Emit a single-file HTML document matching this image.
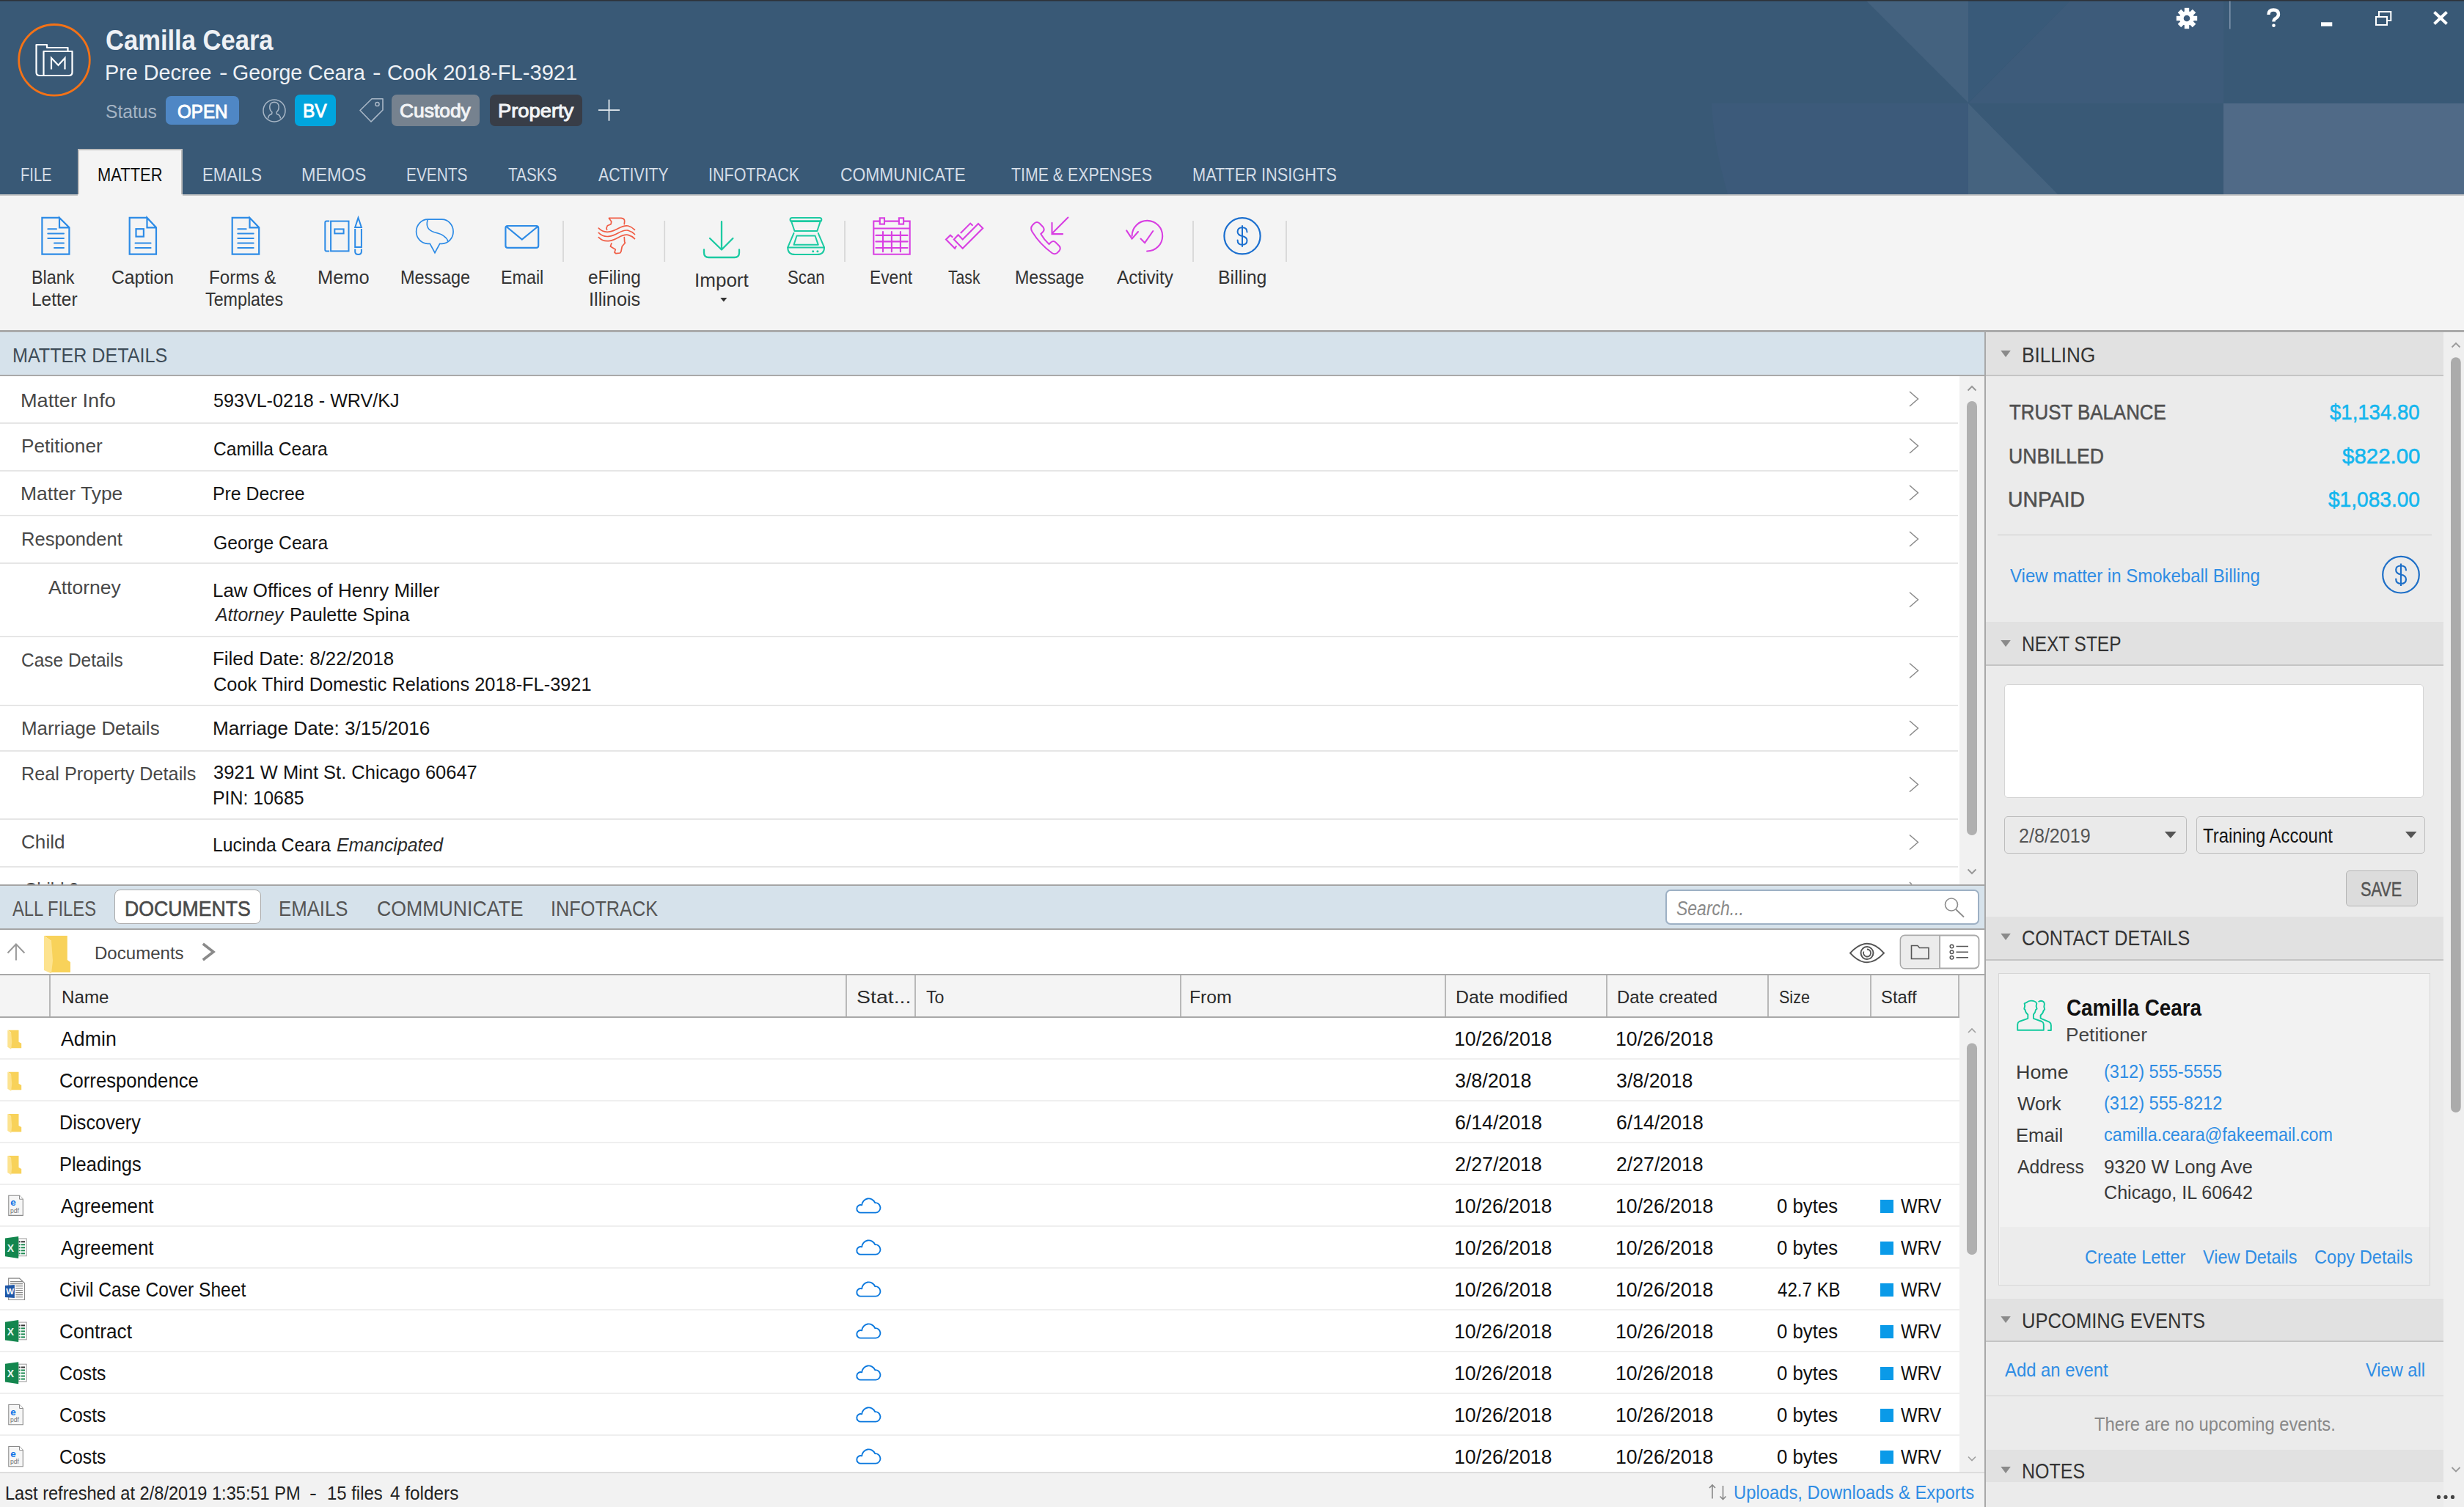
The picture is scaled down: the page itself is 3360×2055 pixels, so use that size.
<!DOCTYPE html>
<html><head><meta charset="utf-8"><title>Smokeball Matter</title>
<style>
html,body{margin:0;padding:0;}
body{width:3360px;height:2055px;overflow:hidden;position:relative;background:#ffffff;font-family:"Liberation Sans",sans-serif;}
.t{position:absolute;white-space:nowrap;line-height:1;transform-origin:0 0;}
.r{position:absolute;}
svg{position:absolute;left:0;top:0;}
</style></head><body>
<div class="r" style="left:0.0px;top:0.0px;width:3360.0px;height:265.0px;background:#395976;"></div>
<svg width="3360" height="265" viewBox="0 0 3360 265" style="left:0;top:0">
<path d="M2334,141 L2684,141 L2684,265 L2356,265 Q2336,195 2334,141 Z" fill="#3c5a7a"/>
<polygon points="2544,0 2684,0 2684,140" fill="#44627f"/>
<polygon points="2684,0 2824,0 2684,140" fill="#395a79"/>
<polygon points="2824,0 3032,0 3032,141 2684,141" fill="#3d5b7a"/>
<polygon points="2684,141 2806,265 2684,265" fill="#45637f"/>
<rect x="3032" y="141" width="328" height="124" fill="#506a87"/>
<rect x="0" y="0" width="3360" height="1.5" fill="#2d3238"/>
<circle cx="74" cy="81.8" r="48.3" fill="none" stroke="#f47216" stroke-width="2.8"/>
<g fill="none" stroke="#ffffff" stroke-width="2.2" stroke-linejoin="round">
<path d="M59.5,103 L54,103 Q49.5,103 49.5,98.5 L49.5,61 L64,61 L64,65 L92.5,65 L92.5,69.5"/>
<path d="M59.5,103 L59.5,70 L98.5,70 L98.5,98.5 Q98.5,103 94,103 Z"/>
<path d="M70,94.5 L70,79 L79.5,89 L88.5,79 L88.5,94.5" stroke-linejoin="miter"/>
</g>
<g transform="translate(2982,25)">
<circle r="10" fill="#fff"/>
<g fill="#fff"><rect x="-3.2" y="-14.2" width="6.4" height="6" /><rect x="-3.2" y="8.2" width="6.4" height="6"/>
<rect x="-14.2" y="-3.2" width="6" height="6.4"/><rect x="8.2" y="-3.2" width="6" height="6.4"/>
<g transform="rotate(45)"><rect x="-3.2" y="-14.2" width="6.4" height="6" /><rect x="-3.2" y="8.2" width="6.4" height="6"/>
<rect x="-14.2" y="-3.2" width="6" height="6.4"/><rect x="8.2" y="-3.2" width="6" height="6.4"/></g></g>
<circle r="4.3" fill="#3d5b7a"/>
</g>
<rect x="3040" y="1.5" width="1.6" height="38" fill="#7d93ab"/>
<path d="M3093.5,20 Q3093.5,13.5 3100.2,13.5 Q3107,13.5 3107,19.5 Q3107,23 3102.5,25.5 Q3100.5,26.8 3100.5,29.5" fill="none" stroke="#fff" stroke-width="4.4"/>
<circle cx="3100.5" cy="34.8" r="2.3" fill="#fff"/>
<rect x="3165" y="30.3" width="15.3" height="5.5" fill="#fff"/>
<g fill="none" stroke="#fff" stroke-width="2"><rect x="3240" y="23" width="15" height="11"/><path d="M3244,22 L3244,16 L3260.3,16 L3260.3,28 L3256,28"/></g>
<path d="M3319.5,16.5 L3336.5,32.5 M3336.5,16.5 L3319.5,32.5" stroke="#fff" stroke-width="4"/>
<circle cx="374" cy="150.9" r="15" fill="none" stroke="#a9b7c6" stroke-width="1.5"/>
<path d="M365.5,161.5 Q366,156.5 370.5,155.5 L371,153 Q367.5,150.5 367.8,145 Q368.3,139.5 374,139.3 Q379.7,139.5 380.2,145 Q380.5,150.5 377,153 L377.5,155.5 Q382,156.5 382.5,161.5" fill="none" stroke="#a9b7c6" stroke-width="1.5"/>
<path d="M491,150.5 L507,134.8 L522,134.8 L522,150 L506,166 Z" fill="none" stroke="#a9b7c6" stroke-width="1.6" stroke-linejoin="round"/>
<circle cx="514.5" cy="142" r="2.6" fill="none" stroke="#a9b7c6" stroke-width="1.5"/>
<path d="M816,150.2 L845,150.2 M830.5,135.8 L830.5,164.7" stroke="#e4eaf0" stroke-width="1.8"/>
</svg>
<div class="t" style="left:143.6px;top:36.4px;font-size:38.37px;color:#eef1f5;font-weight:bold;transform:scaleX(0.9009);">Camilla Ceara</div>
<div class="t" style="left:142.6px;top:84.7px;font-size:29.07px;color:#eef1f5;transform:scaleX(0.9904);">Pre Decree</div>
<div class="t" style="left:298.5px;top:84.7px;font-size:29.07px;color:#eef1f5;transform:scaleX(1.1794);">-</div>
<div class="t" style="left:317.2px;top:84.7px;font-size:29.07px;color:#eef1f5;transform:scaleX(0.9816);">George Ceara</div>
<div class="t" style="left:507.5px;top:84.7px;font-size:29.07px;color:#eef1f5;transform:scaleX(1.1935);">-</div>
<div class="t" style="left:528.1px;top:84.7px;font-size:29.07px;color:#eef1f5;transform:scaleX(1.0030);">Cook 2018-FL-3921</div>
<div class="t" style="left:143.9px;top:139.6px;font-size:25.73px;color:#a5b4c4;transform:scaleX(0.9555);">Status</div>
<div class="r" style="left:226.0px;top:131.0px;width:100.0px;height:39.0px;background:#4f87c5;border-radius:7px;"></div>
<div class="t" style="left:241.9px;top:139.4px;font-size:26.02px;color:#ffffff;transform:scaleX(0.9304);-webkit-text-stroke:1.00px #ffffff;">OPEN</div>
<div class="r" style="left:402.0px;top:129.0px;width:56.0px;height:42.7px;background:#00a5de;border-radius:7px;"></div>
<div class="t" style="left:413.0px;top:139.4px;font-size:25.73px;color:#ffffff;transform:scaleX(0.9507);-webkit-text-stroke:1.00px #ffffff;">BV</div>
<div class="r" style="left:534.0px;top:129.0px;width:120.0px;height:42.7px;background:#76828f;border-radius:7px;"></div>
<div class="t" style="left:545.1px;top:139.4px;font-size:25.73px;color:#f2f4f6;transform:scaleX(1.0258);-webkit-text-stroke:1.00px #f2f4f6;">Custody</div>
<div class="r" style="left:668.0px;top:129.0px;width:126.4px;height:42.7px;background:#383d47;border-radius:7px;"></div>
<div class="t" style="left:679.1px;top:139.4px;font-size:25.73px;color:#f2f4f6;transform:scaleX(1.0625);-webkit-text-stroke:1.00px #f2f4f6;">Property</div>
<div class="r" style="left:106.0px;top:203.0px;width:143.0px;height:63.0px;background:#f4f4f4;box-shadow: inset 2px 2px 0 #bdbdbd, inset -2px 0 0 #bdbdbd;"></div>
<div class="t" style="left:27.9px;top:225.6px;font-size:25.15px;color:#d3dce6;transform:scaleX(0.8006);">FILE</div>
<div class="t" style="left:275.8px;top:225.6px;font-size:25.15px;color:#d3dce6;transform:scaleX(0.8796);">EMAILS</div>
<div class="t" style="left:411.1px;top:225.6px;font-size:25.15px;color:#d3dce6;transform:scaleX(0.9305);">MEMOS</div>
<div class="t" style="left:553.5px;top:225.6px;font-size:25.15px;color:#d3dce6;transform:scaleX(0.8297);">EVENTS</div>
<div class="t" style="left:692.5px;top:225.6px;font-size:25.15px;color:#d3dce6;transform:scaleX(0.8240);">TASKS</div>
<div class="t" style="left:815.7px;top:225.6px;font-size:25.15px;color:#d3dce6;transform:scaleX(0.8465);">ACTIVITY</div>
<div class="t" style="left:966.0px;top:225.6px;font-size:25.15px;color:#d3dce6;transform:scaleX(0.8551);">INFOTRACK</div>
<div class="t" style="left:1145.8px;top:225.6px;font-size:25.15px;color:#d3dce6;transform:scaleX(0.9082);">COMMUNICATE</div>
<div class="t" style="left:1379.0px;top:225.6px;font-size:25.15px;color:#d3dce6;transform:scaleX(0.8479);">TIME &amp; EXPENSES</div>
<div class="t" style="left:1626.0px;top:225.6px;font-size:25.15px;color:#d3dce6;transform:scaleX(0.8660);">MATTER INSIGHTS</div>
<div class="t" style="left:132.9px;top:225.6px;font-size:25.15px;color:#111111;transform:scaleX(0.8721);">MATTER</div>
<div class="r" style="left:0.0px;top:265.0px;width:3360.0px;height:186.0px;background:#f4f4f4;"></div>
<div class="r" style="left:0.0px;top:265.0px;width:106.0px;height:1.5px;background:#c8c8c8;"></div>
<div class="r" style="left:249.0px;top:265.0px;width:3111.0px;height:1.5px;background:#c8c8c8;"></div>
<div class="r" style="left:0.0px;top:450.0px;width:3360.0px;height:2.5px;background:#aaaaaa;"></div>
<svg width="1800" height="200" viewBox="0 265 1800 200" style="left:0;top:265px">
<g fill="none" stroke="#2d8be6" stroke-width="2.2">
<path d="M81,296.9 L57.4,296.9 L57.4,346.7 L94.4,346.7 L94.4,310.3 L81,296.9 L81,310.3 L94.4,310.3" stroke-linejoin="miter"/>
<path d="M65.3,312.2 L77,312.2 M65.3,318.5 L87,318.5 M65.3,325 L87,325 M74,331.6 L87,331.6 M74,338 L87,338" stroke-linecap="round" stroke-width="2"/>
<path d="M200.5,296.9 L176.7,296.9 L176.7,346.7 L213,346.7 L213,310.3 L200.5,296.9 L200.5,310.3 L213,310.3"/>
<rect x="185.5" y="312.2" width="10.4" height="10.4"/>
<path d="M184.5,331.6 L205.6,331.6 M184.5,338 L205.6,338" stroke-linecap="round" stroke-width="2"/>
<path d="M340.5,296.9 L316.7,296.9 L316.7,346.7 L353.2,346.7 L353.2,310.3 L340.5,296.9 L340.5,310.3 L353.2,310.3"/>
<path d="M324.3,312.2 L335.7,312.2 M324.3,318.5 L345.7,318.5 M324.3,325 L345.7,325 M324.3,331.6 L345.7,331.6 M324.3,338 L345.7,338" stroke-linecap="round" stroke-width="2"/>
<path d="M449.2,301.6 L445.3,301.6 Q443.3,301.6 443.3,303.6 L443.3,340.4 Q443.3,342.4 445.3,342.4 L449.2,342.4" stroke-width="2"/>
<rect x="451.1" y="301.6" width="24.4" height="40.8" stroke-width="2"/>
<rect x="456.3" y="312.4" width="12.3" height="6" stroke-width="2"/>
<path d="M484.2,310 L488.5,297 L492.9,310 Z M484.2,312 L484.2,337 L492.9,337 L492.9,312 M484.2,339.5 L484.2,343 Q484.2,347 488.5,347 Q492.9,347 492.9,343 L492.9,339.5" stroke-width="2"/>
<path d="M583.3,299.2 L602.7,299.2 A15.4,16.55 0 0 1 602.7,332.3 L599.7,332.3 L593,344.6 L586.3,332.3 L583.3,332.3 A15.7,16.55 0 0 1 583.3,299.2 Z" stroke-width="1.7" stroke-linejoin="miter"/>
<path d="M583.3,299.5 Q579,312.5 592.5,316.8 Q608.5,320.5 610.9,329.3" stroke-width="1.6"/>
<rect x="689.4" y="308" width="44.8" height="29.9" rx="3" stroke-width="2.2"/>
<path d="M690.5,309 L711.8,326.6 L733.2,309" stroke-width="2.2"/>
</g>
<g fill="none" stroke="#d4d4d4" stroke-width="1.6">
<path d="M768,301 L768,357 M906.3,301 L906.3,357 M1152,301 L1152,357 M1627,301 L1627,357 M1754,301 L1754,357"/>
</g>
<g fill="none" stroke="#f05c44" stroke-width="1.7" stroke-linejoin="round" stroke-linecap="round">
<path d="M827.6,313.3 L826.9,311.2 L828.3,307.8 L833.1,305.7 L833.8,302.2 L830.4,297.4 L846.9,297.4 Q851.7,298 851.7,301.6 L851.3,305.7"/>
<path d="M816.3,311.2 Q822,317 830,316.2 Q836,315.5 843,311.5 Q851,307 856.5,308 Q862,309.5 865.5,313.3"/>
<path d="M816.3,317.4 Q822,323.2 830,322.4 Q836,321.7 843,317.7 Q851,313.2 856.5,314.2 Q862,315.7 865.5,319.5"/>
<path d="M816.3,323.6 Q822,329.4 830,328.6 Q836,327.9 843,323.9 Q851,319.4 856.5,320.4 Q862,321.9 865.5,325.7"/>
<path d="M851.3,323.6 L851.7,329.8 L852.4,331.2 L848.3,336 L846.9,343 L845.5,345 L840,345.7 L838,344.3 L839.3,340.2 L832.4,336 L833.8,331.9"/>
</g>
<g fill="none" stroke="#1ccaa2" stroke-width="2.3" stroke-linecap="round" stroke-linejoin="round">
<path d="M984,302.2 L984,340 M968,325 L984,340.5 L999.4,325"/>
<path d="M960,340.5 L960,344.5 Q960,351 966.5,351 L1001.5,351 Q1008,351 1008,344.5 L1008,340.5"/>
<path d="M1080,297 L1117.8,297 Q1120.3,297 1120.3,299.5 Q1120.3,302 1117.8,302 L1080,302 Q1077.5,302 1077.5,299.5 Q1077.5,297 1080,297 Z" stroke-width="2"/><path d="M1079,301.3 L1119,301.3" stroke-width="2.2"/>
<path d="M1079.3,302.5 L1083.5,315 L1114.3,315 L1118.5,302.5" stroke-width="2"/>
<path d="M1082.5,317.8 L1074.2,337.4 L1124,337.4 L1115.7,317.8" stroke-width="2"/>
<path d="M1086.5,321.5 L1082.5,333.8 L1115.8,333.8 L1111.5,321.5 Z" stroke-width="2"/>
<path d="M1074.2,337.4 Q1074.2,347 1084,347 L1114.2,347 Q1124,347 1124,337.4" stroke-width="2"/>
</g>
<circle cx="1108.7" cy="342.7" r="1.5" fill="#1ccaa2"/><circle cx="1114.9" cy="342.7" r="1.5" fill="#1ccaa2"/>
<g fill="none" stroke="#d83fe2" stroke-width="2.1">
<path d="M1199.8,301.6 L1191.3,301.6 L1191.3,346.7 L1240.7,346.7 L1240.7,301.6 L1232.1,301.6 M1206,301.6 L1225.9,301.6"/>
<path d="M1191.3,311.5 L1240.7,311.5"/>
<rect x="1199.8" y="297.3" width="6.2" height="8.3"/><rect x="1225.9" y="297.3" width="6.2" height="8.3"/>
<path d="M1194.4,320.9 L1237.5,320.9 M1194.4,329.4 L1237.5,329.4 M1194.4,338 L1237.5,338 M1204,316 L1204,343.2 M1215.9,316 L1215.9,343.2 M1227.9,316 L1227.9,343.2" stroke-linecap="round"/>
<path d="M1306.6,320.3 L1312.7,326.4 L1334,305.1 L1340.2,311.2 L1312.7,338.7 L1300.8,326.6 Z" stroke-linejoin="miter"/>
<path d="M1326.5,307.8 L1323.2,304.6 L1309.8,318" />
<path d="M1304.2,335.3 L1302.1,338.7 L1290,326.6 L1295.9,320.7 L1299.3,323.8"/>
<path d="M1456.4,296.6 L1434.5,318.5 M1434.5,303.9 L1434.5,319.1 L1449.1,319.1" stroke-linecap="round"/>
<path d="M1419.3,319 L1422.3,316 Q1425,313 1422.3,309.5 L1417.5,304.5 Q1414,301.5 1410.5,304.5 L1408,307 Q1404.5,311 1407.5,316 Q1418,333 1434.5,345 Q1438,347.5 1441.5,345 L1444.5,342 Q1447,338.5 1444.5,335.5 L1439.5,330.5 Q1436.5,327.5 1433,330.5 L1430.5,333 Q1423.5,326.5 1419.3,319 Z" stroke-width="2"/>
<path d="M1543.6,321.7 A20.8,20.8 0 1 1 1564.1,342.5" stroke-linecap="round"/>
<path d="M1536.2,314.4 L1543.6,325.6 L1552,316" stroke-linecap="round"/>
<path d="M1555.5,325.6 L1561.1,331.2 L1572.3,315" stroke-linecap="round"/>
</g>
<g fill="none" stroke="#1b6fcf" stroke-width="2.2">
<circle cx="1694" cy="321.8" r="24.6"/>
<path d="M1694,307.3 L1694,336.7" stroke-width="2"/>
<path d="M1700.5,316.5 Q1700.5,310.2 1694,310.2 Q1687.6,310.2 1687.6,316 Q1687.6,320.5 1694,322 Q1700.5,323.5 1700.5,328 Q1700.5,333.8 1694,333.8 Q1687.6,333.8 1687.6,327.5" stroke-width="2" stroke-linecap="round"/>
</g>
<path d="M982.3,406 L991.4,406 L986.85,411.6 Z" fill="#333"/>
</svg>
<div class="t" style="left:43.0px;top:366.3px;font-size:25.29px;color:#333333;transform:scaleX(0.9248);">Blank</div>
<div class="t" style="left:42.6px;top:396.3px;font-size:25.29px;color:#333333;transform:scaleX(0.9680);">Letter</div>
<div class="t" style="left:152.1px;top:366.3px;font-size:25.29px;color:#333333;transform:scaleX(0.9757);">Caption</div>
<div class="t" style="left:285.0px;top:366.3px;font-size:25.29px;color:#333333;transform:scaleX(0.9563);">Forms &amp;</div>
<div class="t" style="left:280.0px;top:396.3px;font-size:25.29px;color:#333333;transform:scaleX(0.9208);">Templates</div>
<div class="t" style="left:432.5px;top:366.3px;font-size:25.29px;color:#333333;transform:scaleX(1.0071);">Memo</div>
<div class="t" style="left:545.9px;top:366.3px;font-size:25.29px;color:#333333;transform:scaleX(0.9274);">Message</div>
<div class="t" style="left:682.9px;top:366.3px;font-size:25.29px;color:#333333;transform:scaleX(0.9217);">Email</div>
<div class="t" style="left:801.8px;top:366.3px;font-size:25.29px;color:#333333;transform:scaleX(0.9634);">eFiling</div>
<div class="t" style="left:802.7px;top:396.3px;font-size:25.29px;color:#333333;transform:scaleX(0.9993);">Illinois</div>
<div class="t" style="left:947.0px;top:370.1px;font-size:25.29px;color:#333333;transform:scaleX(1.0293);">Import</div>
<div class="t" style="left:1073.7px;top:366.3px;font-size:25.29px;color:#333333;transform:scaleX(0.8787);">Scan</div>
<div class="t" style="left:1186.0px;top:366.3px;font-size:25.29px;color:#333333;transform:scaleX(0.8988);">Event</div>
<div class="t" style="left:1292.9px;top:366.3px;font-size:25.29px;color:#333333;transform:scaleX(0.8374);">Task</div>
<div class="t" style="left:1383.9px;top:366.3px;font-size:25.29px;color:#333333;transform:scaleX(0.9194);">Message</div>
<div class="t" style="left:1522.8px;top:366.3px;font-size:25.29px;color:#333333;transform:scaleX(0.9588);">Activity</div>
<div class="t" style="left:1660.7px;top:366.3px;font-size:25.29px;color:#333333;transform:scaleX(0.9846);">Billing</div>
<div class="r" style="left:0.0px;top:452.5px;width:2706.0px;height:58.0px;background:#d6e2eb;"></div>
<div class="r" style="left:0.0px;top:510.5px;width:2706.0px;height:2.0px;background:#a9a9a9;"></div>
<div class="t" style="left:16.9px;top:469.6px;font-size:28.49px;color:#3e4c58;transform:scaleX(0.8818);">MATTER DETAILS</div>
<div class="r" style="left:0.0px;top:512.5px;width:2672.0px;height:693.5px;background:#ffffff;"></div>
<div class="r" style="left:2672.0px;top:512.5px;width:34.0px;height:693.5px;background:#f1f1f1;"></div>
<div class="r" style="left:0.0px;top:575.5px;width:2670.0px;height:2.0px;background:#e6e6e6;"></div>
<div class="r" style="left:0.0px;top:640.8px;width:2670.0px;height:2.0px;background:#e6e6e6;"></div>
<div class="r" style="left:0.0px;top:702.3px;width:2670.0px;height:2.0px;background:#e6e6e6;"></div>
<div class="r" style="left:0.0px;top:767.4px;width:2670.0px;height:2.0px;background:#e6e6e6;"></div>
<div class="r" style="left:0.0px;top:867.2px;width:2670.0px;height:2.0px;background:#e6e6e6;"></div>
<div class="r" style="left:0.0px;top:960.8px;width:2670.0px;height:2.0px;background:#e6e6e6;"></div>
<div class="r" style="left:0.0px;top:1022.5px;width:2670.0px;height:2.0px;background:#e6e6e6;"></div>
<div class="r" style="left:0.0px;top:1115.8px;width:2670.0px;height:2.0px;background:#e6e6e6;"></div>
<div class="r" style="left:0.0px;top:1180.6px;width:2670.0px;height:2.0px;background:#e6e6e6;"></div>
<div class="t" style="left:28.4px;top:534.0px;font-size:25.44px;color:#484848;transform:scaleX(1.0673);">Matter Info</div>
<div class="t" style="left:291.3px;top:534.2px;font-size:25.44px;color:#141414;transform:scaleX(0.9872);">593VL-0218 - WRV/KJ</div>
<div class="t" style="left:28.5px;top:596.0px;font-size:25.44px;color:#484848;transform:scaleX(1.0307);">Petitioner</div>
<div class="t" style="left:291.0px;top:600.0px;font-size:25.44px;color:#141414;transform:scaleX(0.9666);">Camilla Ceara</div>
<div class="t" style="left:28.4px;top:661.0px;font-size:25.44px;color:#484848;transform:scaleX(1.0410);">Matter Type</div>
<div class="t" style="left:290.3px;top:661.4px;font-size:25.44px;color:#141414;transform:scaleX(0.9765);">Pre Decree</div>
<div class="t" style="left:28.5px;top:723.2px;font-size:25.44px;color:#484848;transform:scaleX(1.0044);">Respondent</div>
<div class="t" style="left:291.1px;top:727.5px;font-size:25.44px;color:#141414;transform:scaleX(0.9693);">George Ceara</div>
<div class="t" style="left:65.6px;top:788.8px;font-size:25.44px;color:#484848;transform:scaleX(1.0431);">Attorney</div>
<div class="t" style="left:290.2px;top:792.5px;font-size:25.44px;color:#141414;transform:scaleX(1.0194);">Law Offices of Henry Miller</div>
<div class="t" style="left:293.5px;top:826.4px;font-size:25.44px;color:#2a2a2a;font-style:italic;transform:scaleX(0.9769);">Attorney</div>
<div class="t" style="left:395.3px;top:826.4px;font-size:25.44px;color:#141414;transform:scaleX(0.9879);">Paulette Spina</div>
<div class="t" style="left:29.4px;top:887.6px;font-size:25.44px;color:#484848;transform:scaleX(0.9614);">Case Details</div>
<div class="t" style="left:290.2px;top:885.8px;font-size:25.44px;color:#141414;transform:scaleX(1.0165);">Filed Date: 8/22/2018</div>
<div class="t" style="left:291.0px;top:920.5px;font-size:25.44px;color:#141414;transform:scaleX(0.9972);">Cook Third Domestic Relations 2018-FL-3921</div>
<div class="t" style="left:28.5px;top:980.8px;font-size:25.44px;color:#484848;transform:scaleX(1.0183);">Marriage Details</div>
<div class="t" style="left:290.2px;top:980.8px;font-size:25.44px;color:#141414;transform:scaleX(1.0272);">Marriage Date: 3/15/2016</div>
<div class="t" style="left:28.5px;top:1042.9px;font-size:25.44px;color:#484848;transform:scaleX(0.9923);">Real Property Details</div>
<div class="t" style="left:291.3px;top:1041.0px;font-size:25.44px;color:#141414;transform:scaleX(1.0017);">3921 W Mint St. Chicago 60647</div>
<div class="t" style="left:290.3px;top:1075.7px;font-size:25.44px;color:#141414;transform:scaleX(0.9790);">PIN: 10685</div>
<div class="t" style="left:29.3px;top:1136.0px;font-size:25.44px;color:#484848;transform:scaleX(1.0265);">Child</div>
<div class="t" style="left:290.3px;top:1139.6px;font-size:25.44px;color:#141414;transform:scaleX(0.9734);">Lucinda Ceara</div>
<div class="t" style="left:458.7px;top:1139.6px;font-size:25.44px;color:#2a2a2a;font-style:italic;transform:scaleX(0.9773);">Emancipated</div>
<div style="position:absolute;left:0;top:1181px;width:2670px;height:25px;overflow:hidden">
<div class="t" style="left:32.8px;top:20.0px;font-size:25.44px;color:#484848;transform:scaleX(0.9398);">Child 2</div>
</div>
<svg width="2710" height="1210" viewBox="0 0 2710 1210" style="left:0;top:0"><path d="M2604,534.0 L2615.5,544.0 L2604,554.0" fill="none" stroke="#8a8a8a" stroke-width="1.5"/><path d="M2604,598.0 L2615.5,608.0 L2604,618.0" fill="none" stroke="#8a8a8a" stroke-width="1.5"/><path d="M2604,662.0 L2615.5,672.0 L2604,682.0" fill="none" stroke="#8a8a8a" stroke-width="1.5"/><path d="M2604,725.0 L2615.5,735.0 L2604,745.0" fill="none" stroke="#8a8a8a" stroke-width="1.5"/><path d="M2604,807.8 L2615.5,817.8 L2604,827.8" fill="none" stroke="#8a8a8a" stroke-width="1.5"/><path d="M2604,904.5 L2615.5,914.5 L2604,924.5" fill="none" stroke="#8a8a8a" stroke-width="1.5"/><path d="M2604,983.0 L2615.5,993.0 L2604,1003.0" fill="none" stroke="#8a8a8a" stroke-width="1.5"/><path d="M2604,1059.8 L2615.5,1069.8 L2604,1079.8" fill="none" stroke="#8a8a8a" stroke-width="1.5"/><path d="M2604,1138.5 L2615.5,1148.5 L2604,1158.5" fill="none" stroke="#8a8a8a" stroke-width="1.5"/><path d="M2604,1203 L2607,1206" fill="none" stroke="#8a8a8a" stroke-width="1.5"/><rect x="2682" y="547" width="14" height="592" rx="7" fill="#b0b0b0"/><path d="M2683.5,532.5 L2689,527 L2694.5,532.5" fill="none" stroke="#9a9a9a" stroke-width="2"/><path d="M2683.5,1185.5 L2689,1191 L2694.5,1185.5" fill="none" stroke="#9a9a9a" stroke-width="2"/></svg>
<div class="r" style="left:2705.5px;top:452.5px;width:2.5px;height:1602.5px;background:#a8a8a8;"></div>
<div class="r" style="left:0.0px;top:1206.0px;width:2706.0px;height:2.0px;background:#a5a5a5;"></div>
<div class="r" style="left:0.0px;top:1208.0px;width:2706.0px;height:57.5px;background:#d6e2eb;"></div>
<div class="r" style="left:0.0px;top:1265.5px;width:2706.0px;height:2.0px;background:#a5a5a5;"></div>
<div class="r" style="left:156px;top:1212.7px;width:198px;height:45.5px;background:#fff;border:1.6px solid #a9a9a9;border-radius:8px"></div>
<div class="t" style="left:17.0px;top:1224.5px;font-size:28.78px;color:#555555;transform:scaleX(0.8257);">ALL FILES</div>
<div class="t" style="left:170.2px;top:1224.5px;font-size:28.78px;color:#4a4a4a;transform:scaleX(0.9270);-webkit-text-stroke:0.60px #4a4a4a;">DOCUMENTS</div>
<div class="t" style="left:380.3px;top:1224.5px;font-size:28.78px;color:#555555;transform:scaleX(0.8962);">EMAILS</div>
<div class="t" style="left:513.6px;top:1224.5px;font-size:28.78px;color:#555555;transform:scaleX(0.9276);">COMMUNICATE</div>
<div class="t" style="left:751.2px;top:1224.5px;font-size:28.78px;color:#555555;transform:scaleX(0.8788);">INFOTRACK</div>
<div class="r" style="left:2271px;top:1212.6px;width:424px;height:44.5px;background:#fff;border:2px solid #9db0c4;border-radius:7px"></div>
<div class="t" style="left:2286.4px;top:1224.8px;font-size:27.62px;color:#8a8a8a;font-style:italic;transform:scaleX(0.8322);">Search...</div>
<svg width="40" height="40" viewBox="2645 1218 40 40" style="left:2645px;top:1218px"><circle cx="2661" cy="1233.5" r="8.5" fill="none" stroke="#8c8c8c" stroke-width="1.6"/><path d="M2667,1240 L2678,1250.5" stroke="#8c8c8c" stroke-width="1.8"/></svg>
<div class="r" style="left:0.0px;top:1267.5px;width:2706.0px;height:60.5px;background:#ffffff;"></div>
<svg width="2710" height="70" viewBox="0 1266 2710 70" style="left:0;top:1266px">
<path d="M21.9,1287.5 L21.9,1309.5 M10.5,1299.5 L21.9,1287.5 L33.4,1299.5" fill="none" stroke="#999" stroke-width="2"/>
<polygon points="60,1276 91.8,1276 91.8,1309 96,1312 96,1326 70,1326 70,1283" fill="#f8d25a"/>
<polygon points="60,1276 70,1283 72,1310 70,1327.5 60,1323" fill="#fde38f"/>
<path d="M276.8,1287 L291,1298 L276.8,1309" fill="none" stroke="#8a8a8a" stroke-width="3.6"/>
<path d="M2523,1299.6 Q2546,1274 2569,1299.6 Q2546,1325 2523,1299.6 Z" fill="none" stroke="#555" stroke-width="2"/>
<circle cx="2546" cy="1299.6" r="8.5" fill="none" stroke="#555" stroke-width="2"/>
<path d="M2546,1294.5 A5,5 0 1 1 2541.5,1297.5" fill="none" stroke="#555" stroke-width="1.8"/>
<rect x="2591.5" y="1275.5" width="107" height="45" rx="6" fill="#fff" stroke="#a9a9a9" stroke-width="1.8"/>
<path d="M2592.5,1281.5 Q2592.5,1276.5 2597.5,1276.5 L2645,1276.5 L2645,1320 L2597.5,1320 Q2592.5,1320 2592.5,1315 Z" fill="#ececec"/>
<rect x="2644.2" y="1276" width="1.8" height="44.5" fill="#a9a9a9"/>
<path d="M2606.5,1307.5 L2606.5,1289.5 L2615,1289.5 L2617.5,1292.5 L2630,1292.5 L2630,1307.5 Z" fill="none" stroke="#555" stroke-width="1.6"/>
<g fill="none" stroke="#555" stroke-width="1.5"><circle cx="2661.5" cy="1290.5" r="2.3"/><circle cx="2661.5" cy="1298.2" r="2.3"/><circle cx="2661.5" cy="1305.8" r="2.3"/>
<path d="M2667.5,1290.5 L2684,1290.5 M2667.5,1298.2 L2684,1298.2 M2667.5,1305.8 L2684,1305.8"/></g>
</svg>
<div class="t" style="left:129.2px;top:1287.8px;font-size:24.71px;color:#444444;transform:scaleX(0.9733);">Documents</div>
<div class="r" style="left:0.0px;top:1327.8px;width:2706.0px;height:2.0px;background:#a8a8a8;"></div>
<div class="r" style="left:0.0px;top:1329.8px;width:2672.0px;height:56.0px;background:#f4f4f4;"></div>
<div class="r" style="left:2672.0px;top:1329.8px;width:34.0px;height:58.0px;background:#f1f1f1;"></div>
<div class="r" style="left:0.0px;top:1385.8px;width:2672.0px;height:2.0px;background:#a8a8a8;"></div>
<div class="r" style="left:67.3px;top:1329.8px;width:2.0px;height:56.0px;background:#b8b8b8;"></div>
<div class="r" style="left:1153.0px;top:1329.8px;width:2.0px;height:56.0px;background:#b8b8b8;"></div>
<div class="r" style="left:1247.0px;top:1329.8px;width:2.0px;height:56.0px;background:#b8b8b8;"></div>
<div class="r" style="left:1608.5px;top:1329.8px;width:2.0px;height:56.0px;background:#b8b8b8;"></div>
<div class="r" style="left:1970.2px;top:1329.8px;width:2.0px;height:56.0px;background:#b8b8b8;"></div>
<div class="r" style="left:2190.0px;top:1329.8px;width:2.0px;height:56.0px;background:#b8b8b8;"></div>
<div class="r" style="left:2410.0px;top:1329.8px;width:2.0px;height:56.0px;background:#b8b8b8;"></div>
<div class="r" style="left:2549.6px;top:1329.8px;width:2.0px;height:56.0px;background:#b8b8b8;"></div>
<div class="r" style="left:2670.0px;top:1329.8px;width:2.0px;height:56.0px;background:#b8b8b8;"></div>
<div class="t" style="left:83.5px;top:1347.8px;font-size:24.71px;color:#2a2a2a;transform:scaleX(0.9779);">Name</div>
<div class="t" style="left:1168.1px;top:1347.8px;font-size:24.71px;color:#2a2a2a;transform:scaleX(1.1523);">Stat...</div>
<div class="t" style="left:1262.8px;top:1347.8px;font-size:24.71px;color:#2a2a2a;transform:scaleX(0.9383);">To</div>
<div class="t" style="left:1622.0px;top:1347.8px;font-size:24.71px;color:#2a2a2a;transform:scaleX(1.0002);">From</div>
<div class="t" style="left:1984.9px;top:1347.8px;font-size:24.71px;color:#2a2a2a;transform:scaleX(1.0044);">Date modified</div>
<div class="t" style="left:2204.9px;top:1347.8px;font-size:24.71px;color:#2a2a2a;transform:scaleX(0.9684);">Date created</div>
<div class="t" style="left:2425.6px;top:1347.8px;font-size:24.71px;color:#2a2a2a;transform:scaleX(0.8722);">Size</div>
<div class="t" style="left:2564.9px;top:1347.8px;font-size:24.71px;color:#2a2a2a;transform:scaleX(0.9636);">Staff</div>
<div class="r" style="left:0.0px;top:1387.8px;width:2672.0px;height:619.2px;background:#ffffff;"></div>
<div class="r" style="left:2672.0px;top:1387.8px;width:34.0px;height:619.2px;background:#f1f1f1;"></div>
<div class="r" style="left:0.0px;top:1442.8px;width:2672.0px;height:2.0px;background:#efefef;"></div>
<div class="r" style="left:0.0px;top:1499.8px;width:2672.0px;height:2.0px;background:#efefef;"></div>
<div class="r" style="left:0.0px;top:1556.9px;width:2672.0px;height:2.0px;background:#efefef;"></div>
<div class="r" style="left:0.0px;top:1613.9px;width:2672.0px;height:2.0px;background:#efefef;"></div>
<div class="r" style="left:0.0px;top:1671.0px;width:2672.0px;height:2.0px;background:#efefef;"></div>
<div class="r" style="left:0.0px;top:1728.0px;width:2672.0px;height:2.0px;background:#efefef;"></div>
<div class="r" style="left:0.0px;top:1785.1px;width:2672.0px;height:2.0px;background:#efefef;"></div>
<div class="r" style="left:0.0px;top:1842.1px;width:2672.0px;height:2.0px;background:#efefef;"></div>
<div class="r" style="left:0.0px;top:1899.2px;width:2672.0px;height:2.0px;background:#efefef;"></div>
<div class="r" style="left:0.0px;top:1956.2px;width:2672.0px;height:2.0px;background:#efefef;"></div>
<div class="t" style="left:82.5px;top:1403.7px;font-size:26.89px;color:#111111;transform:scaleX(0.9946);">Admin</div>
<div class="t" style="left:1983.3px;top:1403.7px;font-size:26.89px;color:#111111;transform:scaleX(0.9918);">10/26/2018</div>
<div class="t" style="left:2203.3px;top:1403.7px;font-size:26.89px;color:#111111;transform:scaleX(0.9918);">10/26/2018</div>
<div class="t" style="left:81.3px;top:1460.7px;font-size:26.89px;color:#111111;transform:scaleX(0.9550);">Correspondence</div>
<div class="t" style="left:1984.3px;top:1460.7px;font-size:26.89px;color:#111111;transform:scaleX(0.9973);">3/8/2018</div>
<div class="t" style="left:2204.3px;top:1460.7px;font-size:26.89px;color:#111111;transform:scaleX(0.9973);">3/8/2018</div>
<div class="t" style="left:80.5px;top:1517.7px;font-size:26.89px;color:#111111;transform:scaleX(0.9397);">Discovery</div>
<div class="t" style="left:1983.9px;top:1517.7px;font-size:26.89px;color:#111111;transform:scaleX(0.9931);">6/14/2018</div>
<div class="t" style="left:2203.9px;top:1517.7px;font-size:26.89px;color:#111111;transform:scaleX(0.9931);">6/14/2018</div>
<div class="t" style="left:80.5px;top:1574.7px;font-size:26.89px;color:#111111;transform:scaleX(0.9467);">Pleadings</div>
<div class="t" style="left:1984.0px;top:1574.7px;font-size:26.89px;color:#111111;transform:scaleX(0.9929);">2/27/2018</div>
<div class="t" style="left:2204.0px;top:1574.7px;font-size:26.89px;color:#111111;transform:scaleX(0.9929);">2/27/2018</div>
<div class="t" style="left:82.5px;top:1631.7px;font-size:26.89px;color:#111111;transform:scaleX(0.9627);">Agreement</div>
<div class="t" style="left:1983.3px;top:1631.7px;font-size:26.89px;color:#111111;transform:scaleX(0.9918);">10/26/2018</div>
<div class="t" style="left:2203.3px;top:1631.7px;font-size:26.89px;color:#111111;transform:scaleX(0.9918);">10/26/2018</div>
<div class="t" style="left:2423.4px;top:1631.7px;font-size:26.89px;color:#111111;transform:scaleX(0.9590);">0 bytes</div>
<div class="r" style="left:2564.0px;top:1635.9px;width:18.2px;height:18.1px;background:#0a9ae8;"></div>
<div class="t" style="left:2591.9px;top:1631.7px;font-size:26.89px;color:#111111;transform:scaleX(0.8870);">WRV</div>
<div class="t" style="left:82.5px;top:1688.7px;font-size:26.89px;color:#111111;transform:scaleX(0.9627);">Agreement</div>
<div class="t" style="left:1983.3px;top:1688.7px;font-size:26.89px;color:#111111;transform:scaleX(0.9918);">10/26/2018</div>
<div class="t" style="left:2203.3px;top:1688.7px;font-size:26.89px;color:#111111;transform:scaleX(0.9918);">10/26/2018</div>
<div class="t" style="left:2423.4px;top:1688.7px;font-size:26.89px;color:#111111;transform:scaleX(0.9590);">0 bytes</div>
<div class="r" style="left:2564.0px;top:1692.9px;width:18.2px;height:18.1px;background:#0a9ae8;"></div>
<div class="t" style="left:2591.9px;top:1688.7px;font-size:26.89px;color:#111111;transform:scaleX(0.8870);">WRV</div>
<div class="t" style="left:81.3px;top:1745.7px;font-size:26.89px;color:#111111;transform:scaleX(0.9153);">Civil Case Cover Sheet</div>
<div class="t" style="left:1983.3px;top:1745.7px;font-size:26.89px;color:#111111;transform:scaleX(0.9918);">10/26/2018</div>
<div class="t" style="left:2203.3px;top:1745.7px;font-size:26.89px;color:#111111;transform:scaleX(0.9918);">10/26/2018</div>
<div class="t" style="left:2423.8px;top:1745.7px;font-size:26.89px;color:#111111;transform:scaleX(0.8950);">42.7 KB</div>
<div class="r" style="left:2564.0px;top:1749.9px;width:18.2px;height:18.1px;background:#0a9ae8;"></div>
<div class="t" style="left:2591.9px;top:1745.7px;font-size:26.89px;color:#111111;transform:scaleX(0.8870);">WRV</div>
<div class="t" style="left:81.3px;top:1802.7px;font-size:26.89px;color:#111111;transform:scaleX(0.9745);">Contract</div>
<div class="t" style="left:1983.3px;top:1802.7px;font-size:26.89px;color:#111111;transform:scaleX(0.9918);">10/26/2018</div>
<div class="t" style="left:2203.3px;top:1802.7px;font-size:26.89px;color:#111111;transform:scaleX(0.9918);">10/26/2018</div>
<div class="t" style="left:2423.4px;top:1802.7px;font-size:26.89px;color:#111111;transform:scaleX(0.9590);">0 bytes</div>
<div class="r" style="left:2564.0px;top:1806.9px;width:18.2px;height:18.1px;background:#0a9ae8;"></div>
<div class="t" style="left:2591.9px;top:1802.7px;font-size:26.89px;color:#111111;transform:scaleX(0.8870);">WRV</div>
<div class="t" style="left:81.3px;top:1859.7px;font-size:26.89px;color:#111111;transform:scaleX(0.9233);">Costs</div>
<div class="t" style="left:1983.3px;top:1859.7px;font-size:26.89px;color:#111111;transform:scaleX(0.9918);">10/26/2018</div>
<div class="t" style="left:2203.3px;top:1859.7px;font-size:26.89px;color:#111111;transform:scaleX(0.9918);">10/26/2018</div>
<div class="t" style="left:2423.4px;top:1859.7px;font-size:26.89px;color:#111111;transform:scaleX(0.9590);">0 bytes</div>
<div class="r" style="left:2564.0px;top:1863.9px;width:18.2px;height:18.1px;background:#0a9ae8;"></div>
<div class="t" style="left:2591.9px;top:1859.7px;font-size:26.89px;color:#111111;transform:scaleX(0.8870);">WRV</div>
<div class="t" style="left:81.3px;top:1916.7px;font-size:26.89px;color:#111111;transform:scaleX(0.9233);">Costs</div>
<div class="t" style="left:1983.3px;top:1916.7px;font-size:26.89px;color:#111111;transform:scaleX(0.9918);">10/26/2018</div>
<div class="t" style="left:2203.3px;top:1916.7px;font-size:26.89px;color:#111111;transform:scaleX(0.9918);">10/26/2018</div>
<div class="t" style="left:2423.4px;top:1916.7px;font-size:26.89px;color:#111111;transform:scaleX(0.9590);">0 bytes</div>
<div class="r" style="left:2564.0px;top:1920.9px;width:18.2px;height:18.1px;background:#0a9ae8;"></div>
<div class="t" style="left:2591.9px;top:1916.7px;font-size:26.89px;color:#111111;transform:scaleX(0.8870);">WRV</div>
<div class="t" style="left:81.3px;top:1973.7px;font-size:26.89px;color:#111111;transform:scaleX(0.9233);">Costs</div>
<div class="t" style="left:1983.3px;top:1973.7px;font-size:26.89px;color:#111111;transform:scaleX(0.9918);">10/26/2018</div>
<div class="t" style="left:2203.3px;top:1973.7px;font-size:26.89px;color:#111111;transform:scaleX(0.9918);">10/26/2018</div>
<div class="t" style="left:2423.4px;top:1973.7px;font-size:26.89px;color:#111111;transform:scaleX(0.9590);">0 bytes</div>
<div class="r" style="left:2564.0px;top:1977.9px;width:18.2px;height:18.1px;background:#0a9ae8;"></div>
<div class="t" style="left:2591.9px;top:1973.7px;font-size:26.89px;color:#111111;transform:scaleX(0.8870);">WRV</div>
<svg width="2710" height="700" viewBox="0 1380 2710 700" style="left:0;top:1380px"><polygon points="10.5,1404.8 25.5,1404.8 25.5,1420.8 29.2,1422.8 29.2,1429.3 15,1429.3 15,1407.8" fill="#f8d25a"/><polygon points="10.3,1404.8 15.2,1408.3 16.2,1420.8 15.2,1430.8 10.3,1427.8" fill="#fde38f"/><polygon points="10.5,1461.8 25.5,1461.8 25.5,1477.8 29.2,1479.8 29.2,1486.3 15,1486.3 15,1464.8" fill="#f8d25a"/><polygon points="10.3,1461.8 15.2,1465.3 16.2,1477.8 15.2,1487.8 10.3,1484.8" fill="#fde38f"/><polygon points="10.5,1518.9 25.5,1518.9 25.5,1534.9 29.2,1536.9 29.2,1543.4 15,1543.4 15,1521.9" fill="#f8d25a"/><polygon points="10.3,1518.9 15.2,1522.4 16.2,1534.9 15.2,1544.9 10.3,1541.9" fill="#fde38f"/><polygon points="10.5,1575.9 25.5,1575.9 25.5,1591.9 29.2,1593.9 29.2,1600.4 15,1600.4 15,1578.9" fill="#f8d25a"/><polygon points="10.3,1575.9 15.2,1579.4 16.2,1591.9 15.2,1601.9 10.3,1598.9" fill="#fde38f"/><path transform="translate(0,1653.6)" d="M1174.2,0 L1194.3,0 A6.6,6.6 0 1 0 1193.2,-13.4 A9.3,9.3 0 0 0 1175.3,-10.3 A5.3,5.3 0 1 0 1174.2,0 Z" fill="none" stroke="#0a78de" stroke-width="1.9" stroke-linejoin="round"/><path d="M11.8,1630.2 L26.5,1630.2 L31.3,1635.2 L31.3,1657.4 L11.8,1657.4 Z" fill="#f6f6f6" stroke="#8a8a8a" stroke-width="1.1"/><path d="M26.5,1630.2 L26.5,1635.2 L31.3,1635.2" fill="#fff" stroke="#8a8a8a" stroke-width="1"/><text x="14" y="1654.0" font-family="Liberation Sans" font-size="8.5" fill="#777">pdf</text><text x="14.2" y="1644.4" font-family="Liberation Sans" font-weight="bold" font-size="13.5" fill="#0a73e6">e</text><path transform="translate(0,1710.6)" d="M1174.2,0 L1194.3,0 A6.6,6.6 0 1 0 1193.2,-13.4 A9.3,9.3 0 0 0 1175.3,-10.3 A5.3,5.3 0 1 0 1174.2,0 Z" fill="none" stroke="#0a78de" stroke-width="1.9" stroke-linejoin="round"/><rect x="25" y="1689.0" width="11.2" height="23.7" fill="#fff" stroke="#9a9a9a" stroke-width="1"/><rect x="28.8" y="1692.3" width="5.2" height="2" fill="#333"/><rect x="25.6" y="1692.3" width="2" height="2" fill="#333"/><rect x="28.8" y="1696.3" width="5.2" height="2" fill="#1f8a53"/><rect x="25.6" y="1696.3" width="2" height="2" fill="#1f8a53"/><rect x="28.8" y="1700.3" width="5.2" height="2" fill="#1f8a53"/><rect x="25.6" y="1700.3" width="2" height="2" fill="#1f8a53"/><rect x="28.8" y="1704.3" width="5.2" height="2" fill="#1f8a53"/><rect x="25.6" y="1704.3" width="2" height="2" fill="#1f8a53"/><rect x="28.8" y="1708.3" width="5.2" height="2" fill="#1f8a53"/><rect x="25.6" y="1708.3" width="2" height="2" fill="#1f8a53"/><polygon points="7,1688.6 25.2,1686.0 25.2,1716.0 7,1713.3" fill="#13864e"/><text x="9.8" y="1707.2" font-family="Liberation Sans" font-weight="bold" font-size="14" fill="#e6f5ee">X</text><path transform="translate(0,1767.6)" d="M1174.2,0 L1194.3,0 A6.6,6.6 0 1 0 1193.2,-13.4 A9.3,9.3 0 0 0 1175.3,-10.3 A5.3,5.3 0 1 0 1174.2,0 Z" fill="none" stroke="#0a78de" stroke-width="1.9" stroke-linejoin="round"/><path d="M11.7,1743.2 L26.5,1743.2 L33.5,1749.7 L33.5,1772.5 L11.7,1772.5 Z" fill="#fff" stroke="#8a8a8a" stroke-width="1.2"/><rect x="14.0" y="1747.0" width="17.0" height="1.3" fill="#888"/><rect x="14.0" y="1750.0" width="17.0" height="1.3" fill="#888"/><rect x="21.3" y="1753.0" width="9.7" height="1.3" fill="#888"/><rect x="21.3" y="1756.0" width="9.7" height="1.3" fill="#888"/><rect x="21.3" y="1759.0" width="9.7" height="1.3" fill="#888"/><rect x="21.3" y="1762.0" width="9.7" height="1.3" fill="#888"/><rect x="21.3" y="1765.0" width="9.7" height="1.3" fill="#888"/><rect x="21.3" y="1768.0" width="9.7" height="1.3" fill="#888"/><polygon points="7,1752.9 19.9,1752.0 19.9,1769.9 7,1769.0" fill="#1d56a6"/><text x="8.3" y="1765.2" font-family="Liberation Sans" font-weight="bold" font-size="11.5" fill="#fff">W</text><path transform="translate(0,1824.6)" d="M1174.2,0 L1194.3,0 A6.6,6.6 0 1 0 1193.2,-13.4 A9.3,9.3 0 0 0 1175.3,-10.3 A5.3,5.3 0 1 0 1174.2,0 Z" fill="none" stroke="#0a78de" stroke-width="1.9" stroke-linejoin="round"/><rect x="25" y="1803.1" width="11.2" height="23.7" fill="#fff" stroke="#9a9a9a" stroke-width="1"/><rect x="28.8" y="1806.4" width="5.2" height="2" fill="#333"/><rect x="25.6" y="1806.4" width="2" height="2" fill="#333"/><rect x="28.8" y="1810.4" width="5.2" height="2" fill="#1f8a53"/><rect x="25.6" y="1810.4" width="2" height="2" fill="#1f8a53"/><rect x="28.8" y="1814.4" width="5.2" height="2" fill="#1f8a53"/><rect x="25.6" y="1814.4" width="2" height="2" fill="#1f8a53"/><rect x="28.8" y="1818.4" width="5.2" height="2" fill="#1f8a53"/><rect x="25.6" y="1818.4" width="2" height="2" fill="#1f8a53"/><rect x="28.8" y="1822.4" width="5.2" height="2" fill="#1f8a53"/><rect x="25.6" y="1822.4" width="2" height="2" fill="#1f8a53"/><polygon points="7,1802.7 25.2,1800.1 25.2,1830.1 7,1827.4" fill="#13864e"/><text x="9.8" y="1821.3" font-family="Liberation Sans" font-weight="bold" font-size="14" fill="#e6f5ee">X</text><path transform="translate(0,1881.6)" d="M1174.2,0 L1194.3,0 A6.6,6.6 0 1 0 1193.2,-13.4 A9.3,9.3 0 0 0 1175.3,-10.3 A5.3,5.3 0 1 0 1174.2,0 Z" fill="none" stroke="#0a78de" stroke-width="1.9" stroke-linejoin="round"/><rect x="25" y="1860.2" width="11.2" height="23.7" fill="#fff" stroke="#9a9a9a" stroke-width="1"/><rect x="28.8" y="1863.5" width="5.2" height="2" fill="#333"/><rect x="25.6" y="1863.5" width="2" height="2" fill="#333"/><rect x="28.8" y="1867.5" width="5.2" height="2" fill="#1f8a53"/><rect x="25.6" y="1867.5" width="2" height="2" fill="#1f8a53"/><rect x="28.8" y="1871.5" width="5.2" height="2" fill="#1f8a53"/><rect x="25.6" y="1871.5" width="2" height="2" fill="#1f8a53"/><rect x="28.8" y="1875.5" width="5.2" height="2" fill="#1f8a53"/><rect x="25.6" y="1875.5" width="2" height="2" fill="#1f8a53"/><rect x="28.8" y="1879.5" width="5.2" height="2" fill="#1f8a53"/><rect x="25.6" y="1879.5" width="2" height="2" fill="#1f8a53"/><polygon points="7,1859.8 25.2,1857.2 25.2,1887.2 7,1884.5" fill="#13864e"/><text x="9.8" y="1878.4" font-family="Liberation Sans" font-weight="bold" font-size="14" fill="#e6f5ee">X</text><path transform="translate(0,1938.6)" d="M1174.2,0 L1194.3,0 A6.6,6.6 0 1 0 1193.2,-13.4 A9.3,9.3 0 0 0 1175.3,-10.3 A5.3,5.3 0 1 0 1174.2,0 Z" fill="none" stroke="#0a78de" stroke-width="1.9" stroke-linejoin="round"/><path d="M11.8,1915.5 L26.5,1915.5 L31.3,1920.5 L31.3,1942.7 L11.8,1942.7 Z" fill="#f6f6f6" stroke="#8a8a8a" stroke-width="1.1"/><path d="M26.5,1915.5 L26.5,1920.5 L31.3,1920.5" fill="#fff" stroke="#8a8a8a" stroke-width="1"/><text x="14" y="1939.2" font-family="Liberation Sans" font-size="8.5" fill="#777">pdf</text><text x="14.2" y="1929.7" font-family="Liberation Sans" font-weight="bold" font-size="13.5" fill="#0a73e6">e</text><path transform="translate(0,1995.6)" d="M1174.2,0 L1194.3,0 A6.6,6.6 0 1 0 1193.2,-13.4 A9.3,9.3 0 0 0 1175.3,-10.3 A5.3,5.3 0 1 0 1174.2,0 Z" fill="none" stroke="#0a78de" stroke-width="1.9" stroke-linejoin="round"/><path d="M11.8,1972.5 L26.5,1972.5 L31.3,1977.5 L31.3,1999.7 L11.8,1999.7 Z" fill="#f6f6f6" stroke="#8a8a8a" stroke-width="1.1"/><path d="M26.5,1972.5 L26.5,1977.5 L31.3,1977.5" fill="#fff" stroke="#8a8a8a" stroke-width="1"/><text x="14" y="1996.3" font-family="Liberation Sans" font-size="8.5" fill="#777">pdf</text><text x="14.2" y="1986.7" font-family="Liberation Sans" font-weight="bold" font-size="13.5" fill="#0a73e6">e</text><rect x="2682" y="1422.5" width="14" height="288.5" rx="7" fill="#b0b0b0"/><path d="M2684,1408 L2689,1403 L2694,1408" fill="none" stroke="#a0a0a0" stroke-width="1.6"/><path d="M2684,1986.5 L2689,1991.5 L2694,1986.5" fill="none" stroke="#a0a0a0" stroke-width="1.6"/></svg>
<div class="r" style="left:0.0px;top:2006.5px;width:2706.0px;height:2.0px;background:#dddddd;"></div>
<div class="r" style="left:0.0px;top:2008.5px;width:2706.0px;height:46.5px;background:#f2f2f2;"></div>
<div class="t" style="left:7.1px;top:2023.4px;font-size:26.45px;color:#222222;transform:scaleX(0.8923);">Last refreshed at 2/8/2019 1:35:51 PM</div>
<div class="t" style="left:422.4px;top:2023.4px;font-size:26.45px;color:#222222;transform:scaleX(1.1264);">-</div>
<div class="t" style="left:445.6px;top:2023.4px;font-size:26.45px;color:#222222;transform:scaleX(0.9042);">15 files</div>
<div class="t" style="left:531.9px;top:2023.4px;font-size:26.45px;color:#222222;transform:scaleX(0.9210);">4 folders</div>
<div class="t" style="left:2363.8px;top:2022.1px;font-size:26.45px;color:#2f8de4;transform:scaleX(0.9005);">Uploads, Downloads &amp; Exports</div>
<svg width="30" height="30" viewBox="2328 2020 30 30" style="left:2328px;top:2020px"><path d="M2335,2043.5 L2335,2025 M2331,2029 L2335,2025 L2339,2029 M2349.5,2026 L2349.5,2044.5 M2345.5,2040.5 L2349.5,2044.5 L2353.5,2040.5" fill="none" stroke="#888" stroke-width="1.6"/></svg>
<div class="r" style="left:2708.0px;top:452.5px;width:652.0px;height:1602.5px;background:#ebebeb;"></div>
<div class="r" style="left:3332.0px;top:452.5px;width:28.0px;height:1602.5px;background:#efefef;"></div>
<div class="r" style="left:2708.0px;top:452.5px;width:624.0px;height:58.8px;background:#e1e1e1;"></div>
<div class="r" style="left:2708.0px;top:511.3px;width:624.0px;height:2.0px;background:#c4c4c4;"></div>
<svg width="20" height="14" viewBox="0 0 20 14" style="left:2727px;top:476.8px"><path d="M1.4,1 L14.8,1 L8.1,10 Z" fill="#8a8a8a"/></svg>
<div class="t" style="left:2756.5px;top:469.5px;font-size:29.07px;color:#333333;transform:scaleX(0.8997);">BILLING</div>
<div class="t" style="left:2740.0px;top:546.7px;font-size:29.94px;color:#505050;transform:scaleX(0.8643);-webkit-text-stroke:0.55px #505050;">TRUST BALANCE</div>
<div class="t" style="left:3177.4px;top:546.7px;font-size:29.94px;color:#14b6ee;transform:scaleX(0.9202);-webkit-text-stroke:0.55px #14b6ee;">$1,134.80</div>
<div class="t" style="left:2738.6px;top:606.8px;font-size:29.94px;color:#505050;transform:scaleX(0.8880);-webkit-text-stroke:0.55px #505050;">UNBILLED</div>
<div class="t" style="left:3193.6px;top:606.8px;font-size:29.94px;color:#14b6ee;transform:scaleX(0.9837);-webkit-text-stroke:0.55px #14b6ee;">$822.00</div>
<div class="t" style="left:2738.4px;top:666.4px;font-size:29.94px;color:#505050;transform:scaleX(0.9462);-webkit-text-stroke:0.55px #505050;">UNPAID</div>
<div class="t" style="left:3175.0px;top:666.4px;font-size:29.94px;color:#14b6ee;transform:scaleX(0.9384);-webkit-text-stroke:0.55px #14b6ee;">$1,083.00</div>
<div class="r" style="left:2724.4px;top:728.6px;width:591.6px;height:1.8px;background:#cacaca;"></div>
<div class="t" style="left:2740.5px;top:771.8px;font-size:26.45px;color:#2f8de4;transform:scaleX(0.9072);">View matter in Smokeball Billing</div>
<svg width="60" height="60" viewBox="3244 754 60 60" style="left:3244px;top:754px">
<circle cx="3274" cy="783.7" r="24.8" fill="none" stroke="#1e6fc7" stroke-width="2.2"/>
<path d="M3274,768.5 L3274,799" stroke="#1e6fc7" stroke-width="2.2"/>
<path d="M3281,777.5 Q3281,771.5 3274,771.5 Q3267.2,771.5 3267.2,777 Q3267.2,782 3274,783.5 Q3281,785 3281,790 Q3281,796 3274,796 Q3267.2,796 3267.2,789.5" fill="none" stroke="#1e6fc7" stroke-width="2.2" stroke-linecap="round"/>
</svg>
<div class="r" style="left:2708.0px;top:847.5px;width:624.0px;height:58.0px;background:#e1e1e1;"></div>
<div class="r" style="left:2708.0px;top:905.5px;width:624.0px;height:2.0px;background:#c4c4c4;"></div>
<svg width="20" height="14" viewBox="0 0 20 14" style="left:2727px;top:871.5px"><path d="M1.4,1 L14.8,1 L8.1,10 Z" fill="#8a8a8a"/></svg>
<div class="t" style="left:2756.6px;top:864.2px;font-size:29.07px;color:#333333;transform:scaleX(0.8415);">NEXT STEP</div>
<div class="r" style="left:2733px;top:933.4px;width:570px;height:153px;background:#fff;border:1.6px solid #d5d5d5;border-radius:5px"></div>
<div class="r" style="left:2733px;top:1112.6px;width:247px;height:49.5px;background:#eaeaea;border:1.6px solid #bdbdbd;border-radius:5px"></div>
<div class="r" style="left:2994.6px;top:1112.6px;width:310px;height:49.5px;background:#eaeaea;border:1.6px solid #bdbdbd;border-radius:5px"></div>
<div class="t" style="left:2753.0px;top:1126.5px;font-size:26.89px;color:#555555;transform:scaleX(0.9339);">2/8/2019</div>
<div class="t" style="left:3004.1px;top:1126.5px;font-size:26.89px;color:#151515;transform:scaleX(0.8875);">Training Account</div>
<svg width="400" height="20" viewBox="2940 1130 400 20" style="left:2940px;top:1130px"><path d="M2951.8,1134 L2967.7,1134 L2959.75,1143 Z M3280,1134 L3295.5,1134 L3287.75,1143 Z" fill="#555"/></svg>
<div class="r" style="left:3198.5px;top:1186.8px;width:96px;height:47px;background:#dcdcdc;border:1.6px solid #b5b5b5;border-radius:5px"></div>
<div class="t" style="left:3219.4px;top:1199.8px;font-size:26.89px;color:#555555;transform:scaleX(0.8073);-webkit-text-stroke:0.50px #555555;">SAVE</div>
<div class="r" style="left:2708.0px;top:1250.0px;width:624.0px;height:57.5px;background:#e1e1e1;"></div>
<div class="r" style="left:2708.0px;top:1307.5px;width:624.0px;height:2.0px;background:#c4c4c4;"></div>
<svg width="20" height="14" viewBox="0 0 20 14" style="left:2727px;top:1272.4px"><path d="M1.4,1 L14.8,1 L8.1,10 Z" fill="#8a8a8a"/></svg>
<div class="t" style="left:2757.3px;top:1265.1px;font-size:29.07px;color:#333333;transform:scaleX(0.8654);">CONTACT DETAILS</div>
<div class="r" style="left:2725px;top:1326.7px;width:587px;height:424px;background:#f2f2f2;border:1.6px solid #d6d6d6"></div>
<div class="r" style="left:2726.6px;top:1672.6px;width:586.8px;height:79.4px;background:#ececec;"></div>
<svg width="60" height="50" viewBox="2745 1360 60 50" style="left:2745px;top:1360px">
<g fill="none" stroke="#10c99d" stroke-width="1.9" stroke-linejoin="round">
<path d="M2751.2,1404.8 L2751.2,1397 Q2751.5,1394 2753.5,1393 L2765.3,1388.8 L2765.3,1383.5 Q2762,1381 2761.5,1377 L2760.3,1375.8 L2761.2,1371.5 L2760.6,1368.3 L2763.5,1367 Q2766,1364.6 2769.5,1364.6 Q2776,1364.6 2777.3,1368.5 L2776.6,1372 L2777.6,1375.8 L2776,1377 Q2775.5,1381 2772.9,1383.5 L2772.9,1388.8 L2784.5,1393 Q2786.6,1394 2786.8,1397 L2786.8,1404.8 Z"/>
<path d="M2779.6,1366.2 Q2781.5,1364.8 2783,1364.8 Q2787.5,1365 2787.9,1369 L2787.3,1372.8 L2788.2,1376.6 L2786.8,1377.8 Q2786,1382 2782.6,1384.5 L2782.6,1388.6 L2794.5,1393.6 Q2796.8,1395 2796.9,1398 L2796.9,1405 L2792.2,1405"/>
</g></svg>
<div class="t" style="left:2817.9px;top:1359.0px;font-size:30.52px;color:#111111;font-weight:bold;transform:scaleX(0.9120);">Camilla Ceara</div>
<div class="t" style="left:2816.8px;top:1398.1px;font-size:26.45px;color:#444444;transform:scaleX(0.9929);">Petitioner</div>
<div class="t" style="left:2748.8px;top:1448.8px;font-size:26.45px;color:#3a3a3a;transform:scaleX(1.0161);">Home</div>
<div class="t" style="left:2868.8px;top:1447.5px;font-size:26.45px;color:#2f8de4;transform:scaleX(0.8909);">(312) 555-5555</div>
<div class="t" style="left:2750.9px;top:1491.5px;font-size:26.45px;color:#3a3a3a;transform:scaleX(0.9761);">Work</div>
<div class="t" style="left:2868.8px;top:1490.5px;font-size:26.45px;color:#2f8de4;transform:scaleX(0.8919);">(312) 555-8212</div>
<div class="t" style="left:2748.9px;top:1534.9px;font-size:26.45px;color:#3a3a3a;transform:scaleX(0.9696);">Email</div>
<div class="t" style="left:2869.3px;top:1533.8px;font-size:26.45px;color:#2f8de4;transform:scaleX(0.8836);">camilla.ceara@fakeemail.com</div>
<div class="t" style="left:2751.0px;top:1577.6px;font-size:26.45px;color:#3a3a3a;transform:scaleX(0.9372);">Address</div>
<div class="t" style="left:2869.1px;top:1577.6px;font-size:26.45px;color:#3a3a3a;transform:scaleX(0.9741);">9320 W Long Ave</div>
<div class="t" style="left:2869.0px;top:1612.7px;font-size:26.45px;color:#3a3a3a;transform:scaleX(0.9504);">Chicago, IL 60642</div>
<div class="t" style="left:2843.2px;top:1701.3px;font-size:26.45px;color:#2f8de4;transform:scaleX(0.8898);">Create Letter</div>
<div class="t" style="left:3004.2px;top:1701.3px;font-size:26.45px;color:#2f8de4;transform:scaleX(0.8867);">View Details</div>
<div class="t" style="left:3155.8px;top:1701.3px;font-size:26.45px;color:#2f8de4;transform:scaleX(0.8939);">Copy Details</div>
<div class="r" style="left:2708.0px;top:1770.8px;width:624.0px;height:57.5px;background:#e1e1e1;"></div>
<div class="r" style="left:2708.0px;top:1828.3px;width:624.0px;height:2.0px;background:#c4c4c4;"></div>
<svg width="20" height="14" viewBox="0 0 20 14" style="left:2727px;top:1794.4px"><path d="M1.4,1 L14.8,1 L8.1,10 Z" fill="#8a8a8a"/></svg>
<div class="t" style="left:2756.6px;top:1787.1px;font-size:29.07px;color:#333333;transform:scaleX(0.8800);">UPCOMING EVENTS</div>
<div class="t" style="left:2734.3px;top:1854.9px;font-size:26.45px;color:#2f8de4;transform:scaleX(0.9019);">Add an event</div>
<div class="t" style="left:3225.5px;top:1854.9px;font-size:26.45px;color:#2f8de4;transform:scaleX(0.8930);">View all</div>
<div class="r" style="left:2708.0px;top:1902.6px;width:624.0px;height:1.8px;background:#d0d0d0;"></div>
<div class="t" style="left:2856.2px;top:1928.6px;font-size:26.45px;color:#888888;transform:scaleX(0.8985);">There are no upcoming events.</div>
<div class="r" style="left:2708.0px;top:1977.0px;width:624.0px;height:43.7px;background:#e1e1e1;"></div>
<svg width="20" height="14" viewBox="0 0 20 14" style="left:2727px;top:1999.4px"><path d="M1.4,1 L14.8,1 L8.1,10 Z" fill="#8a8a8a"/></svg>
<div style="position:absolute;left:2708px;top:1977px;width:624px;height:43.7px;overflow:hidden">
<div class="t" style="left:48.5px;top:15.1px;font-size:29.07px;color:#333333;transform:scaleX(0.8608);">NOTES</div>
</div>
<svg width="30" height="600" viewBox="3330 460 30 1600" style="left:3330px;top:460px;height:1600px">
<rect x="3342" y="487.3" width="13.7" height="1029.6" rx="6.8" fill="#ababab"/>
<path d="M3343.5,473.5 L3349,468 L3354.5,473.5" fill="none" stroke="#9a9a9a" stroke-width="1.8"/>
<path d="M3343.5,2001 L3349,2006.5 L3354.5,2001" fill="none" stroke="#9a9a9a" stroke-width="1.8"/>
</svg>
<svg width="40" height="12" viewBox="3320 2035 40 12" style="left:3320px;top:2035px"><circle cx="3325.5" cy="2041.4" r="2.6" fill="#444"/><circle cx="3335" cy="2041.4" r="2.6" fill="#444"/><circle cx="3344.5" cy="2041.4" r="2.6" fill="#444"/></svg>
</body></html>
